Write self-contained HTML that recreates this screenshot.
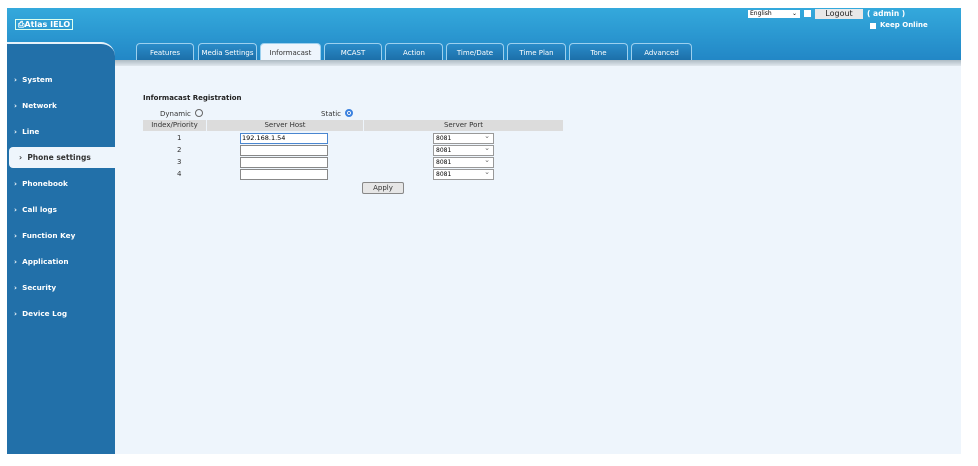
<!DOCTYPE html>
<html><head><style>
body{margin:0;width:978px;height:466px;background:#fff;font-family:Verdana,"DejaVu Sans",sans-serif;position:relative;overflow:hidden}
.hdr{position:absolute;left:7px;top:8px;width:954px;height:52px;background:linear-gradient(#34a9dc,#2287c6)}
.side{position:absolute;left:7px;top:42px;width:108px;height:412px;background:#2270a9;border-top-right-radius:14px;border-top:2px solid #e6f2fa;box-sizing:border-box}
.cont{position:absolute;left:115px;top:60px;width:846px;height:394px;background:#eef5fc}
.strip{position:absolute;left:115px;top:60px;width:846px;height:6px;background:linear-gradient(#aebbc4,#dfe7ee)}
.logo{position:absolute;left:15px;top:19px;font-size:8px;color:#fff;font-weight:bold;border:1px solid #dfe;padding:0 2px;line-height:9px}
.tab{position:absolute;top:43px;height:17px;background:linear-gradient(#2a8cc9,#1c6fa9);border:1px solid #9cd0ee;border-bottom:none;border-radius:4px 4px 0 0;color:#fff;font-size:7px;text-align:center;line-height:18px;box-sizing:border-box}
.tab.on{background:#eef5fc;color:#333}
.nav{position:absolute;left:14px;color:#fff;font-weight:bold;font-size:7.3px}
.sel{position:absolute;left:9px;top:147px;width:106px;height:21px;background:#eef5fc;border-radius:4px 0 0 4px;color:#333;font-weight:bold;font-size:7.5px;line-height:21px;padding-left:10px;box-sizing:border-box}
.t{position:absolute;font-size:7px;color:#333}
.th{position:absolute;top:120px;height:11px;background:#dcdcdc;font-size:7px;color:#333;text-align:center;line-height:11px}
.in{position:absolute;left:240px;width:85px;height:9px;background:#fff;border:1px solid #888;font-size:6.5px;line-height:9px;padding-left:1px}
.sp{position:absolute;left:433px;width:57px;height:9px;background:#fff;border:1px solid #999;font-size:6px;line-height:9px;padding-left:2px;box-sizing:content-box}
.sp:after{content:"⌄";position:absolute;right:3px;top:-2px;font-size:7px;color:#666}
</style></head><body>
<div class="hdr"></div>
<div class="logo">⎙Atlas IELO</div>
<div style="position:absolute;left:748px;top:10px;width:50px;height:8px;background:#fff;font-size:6px;line-height:8px;padding-left:2px">English<span style="float:right;margin-right:3px">⌄</span></div>
<div style="position:absolute;left:804px;top:10px;width:7px;height:7px;background:#fff"></div>
<div style="position:absolute;left:815px;top:9px;width:48px;height:10px;background:#e8e8e8;font-size:8px;text-align:center;line-height:10px;color:#222">Logout</div>
<div style="position:absolute;left:867px;top:9px;color:#fff;font-weight:bold;font-size:7.5px">( admin )</div>
<div style="position:absolute;left:870px;top:23px;width:6px;height:6px;background:#fff"></div>
<div style="position:absolute;left:880px;top:21px;color:#fff;font-weight:bold;font-size:7px">Keep Online</div>
<div class="side"></div>
<div class="cont"></div><div class="strip"></div>
<div class="tab" style="left:136px;width:58px">Features</div>
<div class="tab" style="left:198px;width:59px">Media Settings</div>
<div class="tab on" style="left:260px;width:61px">Informacast</div>
<div class="tab" style="left:324px;width:58px">MCAST</div>
<div class="tab" style="left:385px;width:58px">Action</div>
<div class="tab" style="left:446px;width:58px">Time/Date</div>
<div class="tab" style="left:507px;width:59px">Time Plan</div>
<div class="tab" style="left:569px;width:59px">Tone</div>
<div class="tab" style="left:631px;width:61px">Advanced</div>
<div class="nav" style="top:75px">›&nbsp; System</div>
<div class="nav" style="top:101px">›&nbsp; Network</div>
<div class="nav" style="top:127px">›&nbsp; Line</div>
<div class="sel">›&nbsp; Phone settings</div>
<div class="nav" style="top:179px">›&nbsp; Phonebook</div>
<div class="nav" style="top:205px">›&nbsp; Call logs</div>
<div class="nav" style="top:231px">›&nbsp; Function Key</div>
<div class="nav" style="top:257px">›&nbsp; Application</div>
<div class="nav" style="top:283px">›&nbsp; Security</div>
<div class="nav" style="top:309px">›&nbsp; Device Log</div>
<div class="t" style="left:143px;top:94px;font-weight:bold;color:#222">Informacast Registration</div>
<div class="t" style="left:160px;top:109px">Dynamic <span style="display:inline-block;width:6px;height:6px;border:1px solid #666;border-radius:50%;vertical-align:-1px;margin-left:2px"></span></div>
<div class="t" style="left:321px;top:109px">Static <span style="display:inline-block;width:4px;height:4px;border:2px solid #3b82e0;background:#1d63c8;border-radius:50%;vertical-align:-1px;margin-left:2px;box-shadow:inset 0 0 0 1px #fff"></span></div>
<div class="th" style="left:143px;width:63px">Index/Priority</div>
<div class="th" style="left:207px;width:156px">Server Host</div>
<div class="th" style="left:364px;width:199px">Server Port</div>
<div class="t" style="left:177px;top:134px">1</div>
<div class="t" style="left:177px;top:146px">2</div>
<div class="t" style="left:177px;top:158px">3</div>
<div class="t" style="left:177px;top:170px">4</div>
<div class="in" style="top:133px;border:1px solid #4a86d0">192.168.1.54</div>
<div class="in" style="top:145px"></div>
<div class="in" style="top:157px"></div>
<div class="in" style="top:169px"></div>
<div class="sp" style="top:133px">8081</div>
<div class="sp" style="top:145px">8081</div>
<div class="sp" style="top:157px">8081</div>
<div class="sp" style="top:169px">8081</div>
<div style="position:absolute;left:362px;top:182px;width:40px;height:10px;background:#e6e6e6;border:1px solid #888;border-radius:2px;font-size:7px;text-align:center;line-height:10px;color:#333">Apply</div>
</body></html>
